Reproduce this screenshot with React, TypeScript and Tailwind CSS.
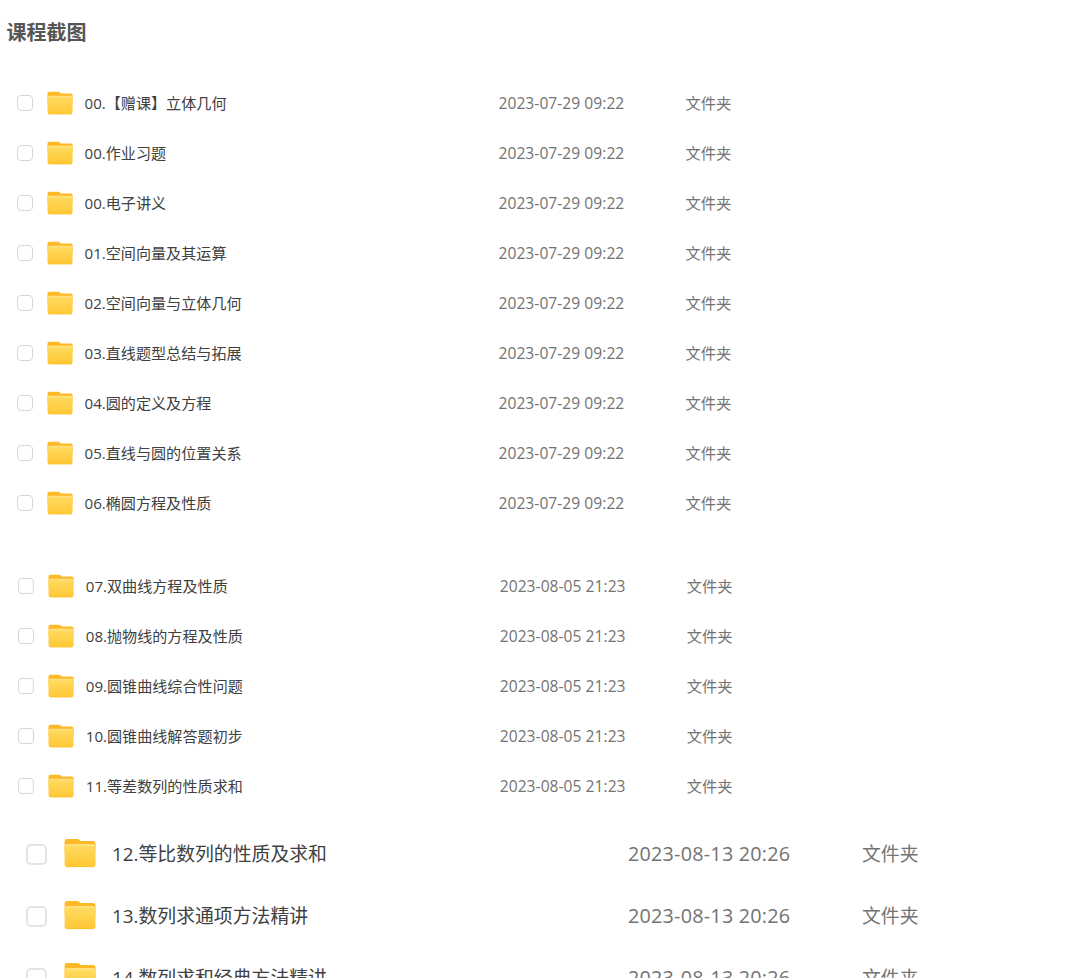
import React from 'react';
import clsx from 'clsx';

const firstBatch = [
  '00.【赠课】立体几何',
  '00.作业习题',
  '00.电子讲义',
  '01.空间向量及其运算',
  '02.空间向量与立体几何',
  '03.直线题型总结与拓展',
  '04.圆的定义及方程',
  '05.直线与圆的位置关系',
  '06.椭圆方程及性质',
];

const secondBatch = [
  '07.双曲线方程及性质',
  '08.抛物线的方程及性质',
  '09.圆锥曲线综合性问题',
  '10.圆锥曲线解答题初步',
  '11.等差数列的性质求和',
];

const thirdBatch = [
  '12.等比数列的性质及求和',
  '13.数列求通项方法精讲',
  '14.数列求和经典方法精讲',
];

function FolderIcon({ className }: { className: string }) {
  return (
    <svg viewBox="0 0 26 24" preserveAspectRatio="none" className={className} aria-hidden="true">
      <defs>
        <linearGradient id="folder-front" x1="0" y1="0" x2="0" y2="1">
          <stop offset="0" stopColor="#ffe386" />
          <stop offset="0.15" stopColor="#ffd95c" />
          <stop offset="1" stopColor="#ffc734" />
        </linearGradient>
      </defs>
      <path d="M.5 2.6Q.5.8 2.3.8H11q1 0 1.8.7l.9.9h9.9q2 0 2 2V12H.5Z" fill="#ffb927" />
      <path d="M.5 6.8Q.5 4.8 2.8 4.8h20.4q2.4 0 2.4 2V21q0 2.2-2.3 2.2H2.8Q.5 23.2.5 21Z" fill="url(#folder-front)" />
      <path d="M2 22.9h22" stroke="#ffbd24" strokeWidth=".6" strokeLinecap="round" />
    </svg>
  );
}

type FileListProps = {
  names: string[];
  date: string;
  large?: boolean;
  className?: string;
};

function FileList({ names, date, large = false, className }: FileListProps) {
  return (
    <ul className={className}>
      {names.map((name) => (
        <li
          key={name}
          className={clsx('flex items-center whitespace-nowrap', large ? 'h-[62px] text-[18.85px]' : 'h-[50px] text-[15.1px]')}
        >
          <span
            className={clsx(
              'shrink-0 bg-white',
              large ? 'size-[21px] rounded-[5px] border-2 border-[#e4e4e4]' : 'size-4 rounded-[4px] border border-[#d6d6d6]'
            )}
          />
          <FolderIcon className={clsx('shrink-0', large ? 'mr-4 mb-0.5 ml-[17px] h-[30px] w-8' : 'mr-3 ml-[13.5px] h-6 w-[26px]')} />
          <span className={clsx('shrink-0 text-[#404040]', large ? 'w-[516px]' : 'w-[414px]')}>{name}</span>
          <span
            className={clsx(
              'shrink-0 text-[#737373]',
              large ? 'w-[234px] text-[19.8px] tracking-[0.22px]' : 'w-[187px] pt-0.5 text-[15.6px] tracking-[0.04px]'
            )}
          >
            {date}
          </span>
          <span className={clsx('text-[#737373]', !large && 'text-[15.3px]')}>文件夹</span>
        </li>
      ))}
    </ul>
  );
}

export default function App() {
  return (
    <main className="h-[978px] overflow-hidden bg-white pt-[18px] font-['Open_Sans','Noto_Sans_CJK_SC',sans-serif]">
      <h1 className="pl-[6.5px] text-[20px] leading-[30px] font-bold text-[#555]">课程截图</h1>
      <FileList names={firstBatch} date="2023-07-29 09:22" className="mt-[30px] pl-[17px]" />
      <FileList names={secondBatch} date="2023-08-05 21:23" className="mt-[33px] pl-[18.25px]" />
      <FileList names={thirdBatch} date="2023-08-13 20:26" large className="mt-3 pl-[26px]" />
    </main>
  );
}
